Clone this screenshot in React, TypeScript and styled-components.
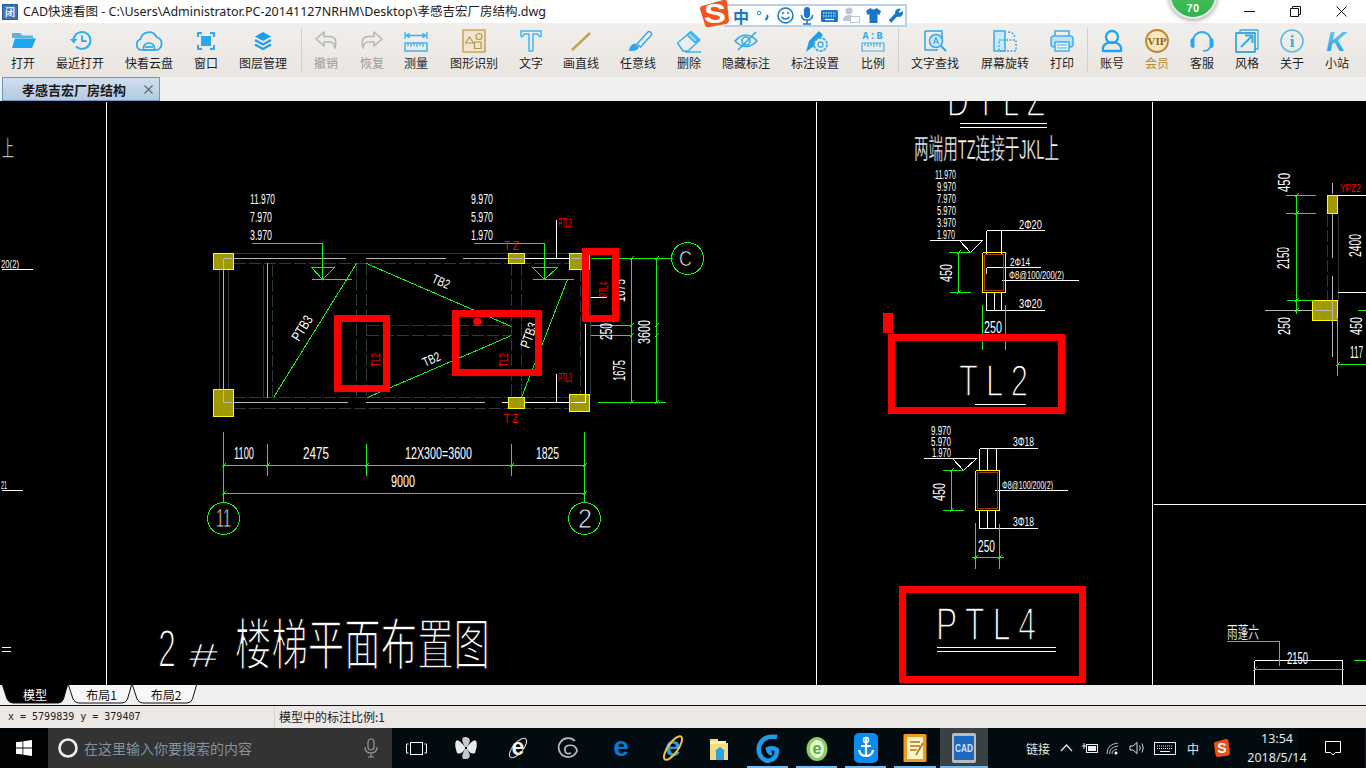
import React from "react";
import styled, { createGlobalStyle } from "styled-components";

const Global = createGlobalStyle`
  html, body { margin: 0; padding: 0; background: #000; overflow: hidden; }
  * { box-sizing: border-box; }
`;

const UI_FONT = `"Noto Sans CJK SC", "Noto Sans", sans-serif`;
const CAD_FONT = `"Liberation Sans", "Noto Sans CJK SC", sans-serif`;

const Page = styled.div`
  width: 1366px;
  height: 768px;
  display: flex;
  flex-direction: column;
  position: relative;
  overflow: hidden;
  font-family: ${UI_FONT};
  color: #222;
`;

/* ---------- title bar ---------- */
const TitleBar = styled.header`
  height: 23px;
  flex: none;
  background: #fff;
  display: flex;
  align-items: center;
  padding-left: 2px;
`;
const TitleText = styled.span`
  margin-left: 5px;
  font-family: "Noto Sans", "Noto Sans CJK SC", sans-serif;
  font-size: 12.5px;
  line-height: 23px;
  color: #1a1a1a;
  white-space: nowrap;
`;
const WindowButtons = styled.div`
  margin-left: auto;
  margin-right: 2px;
  display: flex;
`;
const WindowButton = styled.div`
  width: 46px;
  height: 23px;
  display: flex;
  align-items: center;
  justify-content: center;
  svg { display: block; }
`;

/* ---------- overlays ---------- */
const LevelBadge = styled.div`
  position: absolute;
  left: 1169px;
  top: -29px;
  width: 48px;
  height: 48px;
  border-radius: 50%;
  background: linear-gradient(#57c765, #2fb44c);
  border: 2px solid #e4e8e4;
  box-shadow: 0 1px 5px rgba(0, 0, 0, 0.45);
  color: #fff;
  font: bold 11px/1 "Liberation Sans", sans-serif;
  letter-spacing: 0.5px;
  text-align: center;
  padding-top: 30px;
  z-index: 3;
`;
const ImeBar = styled.div`
  position: absolute;
  left: 724px;
  top: 4px;
  width: 183px;
  height: 23px;
  background: #fbfdff;
  border: 2px solid #bcd0e6;
  border-left: none;
  z-index: 3;
  display: flex;
  align-items: center;
  padding-left: 6px;
`;
const ImeSlot = styled.div`
  width: 22px;
  height: 19px;
  display: flex;
  align-items: center;
  justify-content: center;
  flex: none;
  color: #1976c8;
  font-size: 16px;
  font-weight: 700;
  line-height: 1;
`;
const ImeLogo = styled.div`
  position: absolute;
  left: 700px;
  top: 0;
  width: 30px;
  height: 28px;
  z-index: 4;
  svg { display: block; }
`;

/* ---------- toolbar ---------- */
const Toolbar = styled.nav`
  height: 54px;
  flex: none;
  display: flex;
  background: linear-gradient(#f1efec, #e9e5e1);
`;
const ToolItem = styled.div<{ $w: number }>`
  width: ${(p) => p.$w}px;
  flex: none;
  padding-top: 4px;
  display: flex;
  flex-direction: column;
  align-items: center;
  svg { display: block; flex: none; }
`;
const ToolLabel = styled.span<{ $tone?: string }>`
  font-size: 12px;
  line-height: 16px;
  white-space: nowrap;
  color: ${(p) => (p.$tone === "off" ? "#9a9a9a" : p.$tone === "vip" ? "#bd8a2e" : "#1f1f1f")};
`;
const ToolSep = styled.div<{ $ml: number; $mr: number }>`
  width: 1px;
  height: 44px;
  margin: 5px ${(p) => p.$mr}px 0 ${(p) => p.$ml}px;
  background: #d3d0cc;
  flex: none;
`;

/* ---------- document tabs ---------- */
const DocTabs = styled.div`
  height: 24px;
  flex: none;
  background: #f0f0f0;
  padding-left: 2px;
  display: flex;
`;
const DocTab = styled.div`
  width: 158px;
  height: 24px;
  background: linear-gradient(#d0dfee, #b3cbe3);
  border: 1px solid #7196c4;
  display: flex;
  align-items: center;
  padding-left: 19px;
  font-size: 13px;
  font-weight: 700;
  color: #1a1a1a;
`;
const DocClose = styled.span`
  margin-left: auto;
  margin-right: 6px;
  display: flex;
  svg { display: block; }
`;

/* ---------- drawing ---------- */
const Canvas = styled.main`
  height: 584px;
  flex: none;
  background: #000;
  svg { display: block; }
`;
const CadStroke = styled.path<{ $c: string; $dash?: boolean }>`
  fill: none;
  stroke: ${(p) => p.$c};
  stroke-width: 1;
  stroke-dasharray: ${(p) => (p.$dash ? "12 3" : "none")};
`;
const CadLabel = styled.text<{ $c: string; $thin: number }>`
  font-family: ${CAD_FONT};
  fill: ${(p) => p.$c};
  stroke: ${(p) => (p.$thin ? "#000" : "none")};
  stroke-width: ${(p) => p.$thin}px;
`;
const Column = styled.rect`
  fill: #a09a00;
  stroke: #ffff00;
  stroke-width: 1;
`;
const Marker = styled.rect`
  fill: none;
  stroke: #ff0000;
  stroke-width: 7;
`;
const Axis = styled.circle`
  fill: none;
  stroke: #1cf01c;
  stroke-width: 1;
  shape-rendering: crispEdges;
`;

/* ---------- sheet tabs ---------- */
const SheetBar = styled.div`
  height: 21px;
  flex: none;
  background: #f0f0f0;
  border-bottom: 1px solid #111;
  padding-left: 2px;
  display: flex;
`;
const SheetTab = styled.div<{ $w: number; $on?: boolean }>`
  position: relative;
  width: ${(p) => p.$w}px;
  height: 19px;
  padding-left: ${(p) => (p.$on ? 0 : 3)}px;
  display: flex;
  align-items: center;
  justify-content: center;
  font-size: 12px;
  line-height: 1;
  color: ${(p) => (p.$on ? "#fff" : "#111")};
  svg { position: absolute; inset: 0; }
  span { position: relative; }
`;

/* ---------- status bar ---------- */
const StatusBar = styled.div`
  height: 22px;
  flex: none;
  background: #ebe8e5;
  display: flex;
  align-items: center;
`;
const Coords = styled.div`
  width: 275px;
  height: 22px;
  padding-left: 8px;
  border-right: 1px solid #d6d3d0;
  font: 10px/22px "DejaVu Sans Mono", monospace;
  color: #222;
`;
const ScaleNote = styled.div`
  padding-left: 4px;
  font-size: 12px;
  line-height: 22px;
  color: #222;
`;

/* ---------- taskbar ---------- */
const Taskbar = styled.footer`
  height: 40px;
  flex: none;
  background: #020c10;
  display: flex;
  align-items: stretch;
`;
const StartButton = styled.div`
  width: 48px;
  flex: none;
  background: #010305;
  display: flex;
  align-items: center;
  justify-content: center;
`;
const SearchBox = styled.div`
  width: 344px;
  flex: none;
  background: #333;
  display: flex;
  align-items: center;
  padding-left: 9px;
  font-size: 14px;
  color: #84929e;
  svg { display: block; flex: none; }
`;
const SearchText = styled.span`
  margin-left: 5px;
  margin-right: 10px;
  width: 270px;
  white-space: nowrap;
`;
const TaskSlot = styled.div<{ $w: number; $open?: boolean; $active?: boolean }>`
  width: ${(p) => p.$w}px;
  flex: none;
  display: flex;
  align-items: center;
  justify-content: center;
  background: ${(p) => (p.$active ? "#3a4144" : "transparent")};
  position: relative;
  svg { display: block; }
  &::after {
    content: "";
    display: ${(p) => (p.$open ? "block" : "none")};
    position: absolute;
    left: ${(p) => (p.$active ? 0 : 4)}px;
    right: ${(p) => (p.$active ? 0 : 4)}px;
    bottom: 0;
    height: 2px;
    background: #76b9ed;
  }
`;
const Tray = styled.div`
  flex: none;
  margin-left: 38px;
  display: flex;
  align-items: center;
  color: #e8e8e8;
  svg { display: block; flex: none; }
`;
const TrayText = styled.span<{ $w: number }>`
  width: ${(p) => p.$w}px;
  flex: none;
  text-align: center;
  font-size: 12px;
  white-space: nowrap;
`;
const TrayIcon = styled.div<{ $w: number }>`
  width: ${(p) => p.$w}px;
  flex: none;
  display: flex;
  justify-content: center;
`;
const Clock = styled.div`
  width: 70px;
  flex: none;
  font-family: "Noto Sans", sans-serif;
  font-size: 12.5px;
  line-height: 19px;
  padding-top: 1px;
  color: #e8e8e8;
  text-align: center;
  white-space: nowrap;
  background: linear-gradient(90deg, transparent 55px, #010305 55px);
`;
const Notify = styled.div`
  flex: none;
  width: 54px;
  padding-right: 12px;
  background: #010305;
  border-right: 1px solid #1c2226;
  display: flex;
  align-items: center;
  justify-content: center;
`;

/* ---------- toolbar icons ---------- */
const B = "#2aa9ee";
const IconBox: React.FC<{ children: React.ReactNode }> = ({ children }) => (
  <svg width="34" height="28" viewBox="0 0 34 28" fill="none" strokeLinejoin="round">
    {children}
  </svg>
);

const ICONS: Record<string, React.ReactNode> = {
  open: (
    <>
      <path d="M6 6h8l2.500 2.500H27V11H6z" fill="#55b3ee" />
      <path d="M6 21l3-9.500h21L26 21z" fill="#1ea5f0" />
    </>
  ),
  recent: (
    <g stroke="#33aef0" strokeWidth="2">
      <path d="M10.500 12.500a8.500 8.500 0 1 1 2.500 7" />
      <path d="M7 12h7.500l-3.800 4.500z" fill="#33aef0" stroke="none" />
      <path d="M19 8.500V14h4.500" />
    </g>
  ),
  cloud: (
    <g stroke={B} strokeWidth="1.700">
      <path d="M10 23a5.500 5.500 0 0 1-1.500-10.700A8.500 8.500 0 0 1 24.500 10a6.800 6.800 0 0 1 .5 13z" />
      <path d="M11.500 23v-2.500a5.500 4.500 0 0 1 11 0V23z" />
      <path d="M13 20h8" />
    </g>
  ),
  window: (
    <>
      <g stroke={B} strokeWidth="2">
        <path d="M9 10V6h4M21 6h4v4M25 18v4h-4M13 22H9v-4" />
      </g>
      <rect x="12" y="9" width="10" height="10" fill="#2aa7ee" />
    </>
  ),
  layers: (
    <>
      <path d="M17 5l8 4.500-8 4.500-8-4.500z" fill="#1e9fe8" />
      <path d="M9 13l8 4.500 8-4.500" stroke="#1e9fe8" strokeWidth="2.200" />
      <path d="M9 17.500l8 4.500 8-4.500" stroke="#1e9fe8" strokeWidth="2.200" />
    </>
  ),
  undo: (
    <path d="M15 5L7 12l8 7v-4h6q4 0 5 6q3-11-5-11.500h-6z" stroke="#b8b8b8" strokeWidth="1.600" />
  ),
  redo: (
    <path d="M19 5l8 7-8 7v-4h-6q-4 0-5 6q-3-11 5-11.500h6z" stroke="#b8b8b8" strokeWidth="1.600" />
  ),
  measure: (
    <g stroke="#3fb2ef" strokeWidth="1.300">
      <path d="M6 5v7M28 5v7M7 8.500h20" />
      <path d="M7 8.500l3-2v4zM27 8.500l-3-2v4z" fill="#3fb2ef" />
      <rect x="6" y="16" width="22" height="8" strokeWidth="1.500" />
      <path d="M9 16v3M12 16v4M15 16v3M18 16v4M21 16v3M24 16v4" />
    </g>
  ),
  shape: (
    <>
      <rect x="6" y="3" width="22" height="22" fill="#efe4cd" stroke="#c7a762" strokeWidth="1.600" />
      <g stroke="#b5964f" strokeWidth="1.200">
        <circle cx="22" cy="9.500" r="3" />
        <path d="M8.500 16l4-6 4 6z" />
        <rect x="17.500" y="15" width="6.500" height="6.500" />
      </g>
    </>
  ),
  text: (
    <path d="M7 4h20v5.500h-1.800L24 7h-5v17h-4V7h-5L8.800 9.500H7z" stroke="#3fb8f0" strokeWidth="1.500" />
  ),
  line: <path d="M8 23L26 6" stroke="#c6a254" strokeWidth="2.500" />,
  brush: (
    <>
      <path d="M16 17L26.500 5.500a2 2 0 0 1 3.500 3L19.500 20z" stroke="#2da8ea" strokeWidth="1.400" />
      <path d="M8 24q.5-6.500 6-7.500l4 3.500q-1 4.500-10 4z" fill="#2aa6ea" />
    </>
  ),
  eraser: (
    <g stroke="#35aeea" strokeWidth="1.400">
      <path d="M5.500 16L19 4.500l9 8.500-12 11h-5z" />
      <path d="M15 8l3-2.500 8 7.500-3 2.500z" fill="#9ad6f2" />
      <path d="M13 25h16" />
    </g>
  ),
  eye: (
    <g stroke="#2aa9ee" strokeWidth="1.600">
      <path d="M6 14q11-12 22 0q-11 11-22 0z" />
      <circle cx="17" cy="14" r="4" />
      <path d="M9 23L27 5" />
    </g>
  ),
  setting: (
    <>
      <path d="M8 25l3-11L21 4l4 4-9 11z" fill="#1e9fe8" />
      <circle cx="22.500" cy="17.500" r="6.500" fill="#f0eeeb" stroke="#38ace8" strokeWidth="1.800" strokeDasharray="3 1" />
      <circle cx="22.500" cy="17.500" r="2.500" stroke="#38ace8" strokeWidth="1.300" />
    </>
  ),
  ratio: (
    <>
      <text x="17" y="12" textAnchor="middle" fontFamily="Liberation Mono, monospace" fontWeight="700" fontSize="10" letterSpacing="1" fill="#2aa6ea">
        A:B
      </text>
      <g stroke="#42b2ea" strokeWidth="1.200">
        <rect x="6" y="16" width="22" height="8" />
        <path d="M9 16v3M12 16v4M15 16v3M18 16v4M21 16v3M24 16v4" />
      </g>
    </>
  ),
  find: (
    <g stroke="#2fa9ea" strokeWidth="1.500">
      <path d="M7 4h17v10M7 4v19h13" />
      <circle cx="18" cy="14" r="6.500" fill="#cfe8f7" />
      <path d="M23 19l5 5" strokeWidth="2" />
      <path d="M15.500 17l2.500-6.500L20.500 17M16.500 15h3" strokeWidth="1.100" />
    </g>
  ),
  rotate: (
    <>
      <rect x="6" y="4" width="11" height="20" fill="#cde9f8" stroke="#38ace8" strokeWidth="1.500" />
      <rect x="11" y="13" width="17" height="11" stroke="#38ace8" strokeWidth="1.400" strokeDasharray="2 1.500" />
      <path d="M20 5q6 0 7 6" stroke="#38ace8" strokeWidth="1.400" strokeDasharray="2 1.500" />
    </>
  ),
  print: (
    <g stroke="#3fb2ef" strokeWidth="1.600">
      <path d="M10 9V4h14v5" />
      <rect x="6" y="9" width="22" height="11" rx="3" fill="#bfe2f6" />
      <rect x="10" y="15" width="14" height="9" fill="#eef6fb" />
      <path d="M12 18h10M12 21h10" strokeWidth="1" />
    </g>
  ),
  user: (
    <g stroke="#1aa6f5" strokeWidth="2.300">
      <circle cx="17" cy="10" r="6" />
      <path d="M8 24q-1-7 6-8.500h6q7 1.500 6 8.500z" />
    </g>
  ),
  vip: (
    <>
      <circle cx="17" cy="14" r="11" fill="#f8e8c0" stroke="#b9862f" strokeWidth="1.800" />
      <text x="17" y="18" textAnchor="middle" fontFamily="Liberation Serif, serif" fontWeight="700" fontSize="11" fill="#8f5f16">
        VIP
      </text>
    </>
  ),
  service: (
    <>
      <path d="M8 14a9 9 0 0 1 18 0" stroke="#27a7ee" strokeWidth="2" />
      <path d="M5.500 13a3 4.500 0 0 1 4-1v8a3 4.500 0 0 1-4-1z" fill="#27a7ee" />
      <path d="M28.500 13a3 4.500 0 0 0-4-1v8a3 4.500 0 0 0 4-1z" fill="#27a7ee" />
      <path d="M25 20q-1 4-7 4" stroke="#27a7ee" strokeWidth="1.500" />
    </>
  ),
  style: (
    <g stroke="#3aaae5" strokeWidth="1.800">
      <path d="M10 6V3h18v19h-3" strokeWidth="1.300" />
      <rect x="6" y="6" width="19" height="19" />
      <path d="M11 20L22 9M15 8.500h7.500V16" strokeWidth="2" />
    </g>
  ),
  about: (
    <>
      <circle cx="17" cy="14" r="11" stroke="#5abbe8" strokeWidth="1.600" />
      <text x="17" y="20" textAnchor="middle" fontFamily="Liberation Serif, serif" fontWeight="700" fontSize="17" fill="#3fa9de">
        i
      </text>
    </>
  ),
  site: (
    <>
      <defs>
        <linearGradient id="siteK" x1="0" y1="0" x2="0" y2="1">
          <stop offset="0" stopColor="#6fcaf2" />
          <stop offset="1" stopColor="#159ee0" />
        </linearGradient>
      </defs>
      <text x="16" y="24" textAnchor="middle" fontFamily="Liberation Sans, sans-serif" fontStyle="italic" fontWeight="700" fontSize="27" fill="url(#siteK)">
        K
      </text>
    </>
  ),
};

type Tool = { k: string; label: string; w: number; tone?: string };
const GROUP_A: Tool[] = [
  { k: "open", label: "打开", w: 46 },
  { k: "recent", label: "最近打开", w: 68 },
  { k: "cloud", label: "快看云盘", w: 70 },
  { k: "window", label: "窗口", w: 44 },
  { k: "layers", label: "图层管理", w: 70 },
];
const GROUP_B: Tool[] = [
  { k: "undo", label: "撤销", w: 44, tone: "off" },
  { k: "redo", label: "恢复", w: 48, tone: "off" },
  { k: "measure", label: "测量", w: 40 },
  { k: "shape", label: "图形识别", w: 76 },
  { k: "text", label: "文字", w: 38 },
  { k: "line", label: "画直线", w: 62 },
  { k: "brush", label: "任意线", w: 52 },
  { k: "eraser", label: "删除", w: 50 },
  { k: "eye", label: "隐藏标注", w: 64 },
  { k: "setting", label: "标注设置", w: 74 },
  { k: "ratio", label: "比例", w: 42 },
];
const GROUP_C: Tool[] = [
  { k: "find", label: "文字查找", w: 70 },
  { k: "rotate", label: "屏幕旋转", w: 70 },
  { k: "print", label: "打印", w: 44 },
];
const GROUP_D: Tool[] = [
  { k: "user", label: "账号", w: 44 },
  { k: "vip", label: "会员", w: 46, tone: "vip" },
  { k: "service", label: "客服", w: 44 },
  { k: "style", label: "风格", w: 46 },
  { k: "about", label: "关于", w: 44 },
  { k: "site", label: "小站", w: 46 },
];

const ToolGroup: React.FC<{ tools: Tool[] }> = ({ tools }) => (
  <>
    {tools.map((t) => (
      <ToolItem key={t.k} $w={t.w}>
        <IconBox>{ICONS[t.k]}</IconBox>
        <ToolLabel $tone={t.tone}>{t.label}</ToolLabel>
      </ToolItem>
    ))}
  </>
);

/* ---------- CAD data (sheet coordinates) ---------- */
const seg = (list: number[][]) =>
  list.map(([a, b, c, d]) => `M${Math.round(a) + 0.5} ${Math.round(b) + 0.5}L${Math.round(c) + 0.5} ${Math.round(d) + 0.5}`).join("");

const WHITE_LINES = [
  [106, 101, 106, 685], [816, 101, 816, 685], [1152, 101, 1152, 685], [1153, 504, 1366, 504],
  [1, 269, 32, 269], [1, 490, 22, 490], [1, 647, 10, 647], [1, 651, 10, 651],
  [959, 123, 1046, 123], [959, 127, 1046, 127],
  [929, 240, 982, 240], [959, 240, 970, 252], [982, 240, 970, 252],
  [986, 230, 1044, 230], [986, 230, 986, 253], [1001, 230, 1001, 253],
  [986, 310, 1044, 310], [986, 292, 986, 310], [994, 292, 994, 310], [1001, 292, 1001, 310],
  [986, 267, 1040, 267], [986, 267, 986, 273], [1001, 280, 1078, 280],
  [974, 404, 1025, 404],
  [923, 458, 976, 458], [952, 458, 963, 470], [976, 458, 963, 470],
  [979, 448, 1037, 448], [979, 448, 979, 470], [987, 448, 987, 470], [996, 448, 996, 470],
  [979, 528, 1037, 528], [979, 510, 979, 528], [987, 510, 987, 528], [995, 510, 995, 528],
  [994, 490, 1067, 490],
  [936, 647, 1055, 647], [936, 651, 1055, 651],
  [1254, 660, 1342, 660], [1254, 660, 1254, 685], [1342, 660, 1342, 685],
  [1337, 195, 1365, 195], [1337, 292, 1365, 292],
  [524, 258, 570, 258], [501, 402, 585, 402], [585, 323, 585, 402],
  [556, 219, 556, 258], [556, 373, 556, 402], [590, 297, 606, 297],
];
const GREY_LINES = [
  [223, 258, 345, 258], [365, 258, 445, 258], [462, 258, 508, 258],
  [223, 262, 223, 392], [267, 262, 267, 397], [223, 402, 347, 402], [365, 402, 484, 402],
  [1264, 310, 1332, 310], [1332, 182, 1332, 193], [1332, 195, 1332, 257], [1332, 275, 1332, 356],
];
const OVER_COLUMN_LINES = [
  [223, 258, 233, 258], [223, 258, 223, 269], [223, 389, 223, 402], [223, 402, 233, 402],
  [570, 258, 580, 258], [508, 258, 524, 258], [1313, 310, 1332, 310], [1332, 300, 1332, 320],
];
const DARK_LINES = [
  [233, 253, 569, 253], [219, 269, 219, 389], [228, 269, 228, 389], [263, 264, 263, 397],
  [590, 269, 590, 394], [1338, 214, 1338, 300],
];
const DASH_LINES = [
  [233, 263, 569, 263], [233, 397, 569, 397], [233, 408, 569, 408], [272, 264, 272, 397],
  [356, 263, 356, 397], [366, 263, 366, 397], [511, 263, 511, 397], [521, 263, 521, 397],
  [366, 325, 511, 325], [366, 335, 511, 335], [580, 269, 580, 394], [1327, 214, 1327, 300],
];
const GREEN_LINES = [
  [251, 243, 322, 243], [322, 243, 322, 279], [311, 279, 351, 279], [311, 267, 334, 267], [311, 267, 322, 279], [334, 267, 322, 279],
  [473, 243, 544, 243], [544, 243, 544, 279], [532, 267, 557, 267], [532, 267, 544, 279], [557, 267, 544, 279], [532, 279, 573, 279],
  [273, 397, 356, 263], [366, 263, 511, 326], [367, 397, 511, 335], [521, 397, 567, 279],
  [590, 258, 672, 258], [590, 325, 631, 325], [590, 335, 631, 335], [597, 402, 665, 402], [631, 258, 631, 402], [656, 258, 656, 402],
  [223, 431, 223, 502], [267, 443, 267, 475], [366, 443, 366, 475], [511, 443, 511, 475], [584, 431, 584, 502],
  [223, 465, 585, 465], [223, 493, 585, 493],
  [948, 252, 970, 252], [949, 292, 970, 292], [958, 252, 958, 292], [982, 304, 982, 349], [1005, 304, 1005, 349],
  [942, 470, 963, 470], [942, 510, 963, 510], [951, 470, 951, 510], [975, 522, 975, 568], [999, 523, 999, 568], [971, 557, 1003, 557],
  [1285, 195, 1315, 195], [1285, 213, 1315, 213], [1296, 194, 1296, 313], [1286, 300, 1313, 300],
  [1337, 317, 1337, 375], [1337, 364, 1365, 364], [1357, 310, 1365, 310],
  [1226, 641, 1279, 641], [1279, 641, 1279, 665], [1254, 669, 1343, 669], [1353, 660, 1365, 660],
];
const tick = (x: number, y: number) => [x - 2, y + 2, x + 2, y - 2];
const GREEN_TICKS = [
  ...[223, 267, 366, 511, 584].map((x) => tick(x, 465)),
  tick(223, 493), tick(584, 493),
  ...[258, 325, 335, 402].flatMap((y) => [tick(631, y), tick(656, y)]),
  tick(958, 252), tick(958, 292), tick(951, 470), tick(951, 510), tick(975, 557), tick(999, 557),
  tick(1296, 195), tick(1296, 213), tick(1296, 300), tick(1296, 310), tick(1337, 364), tick(1254, 669),
];

type Lbl = { t: string; x: number; y: number; w: number; s: number; r?: number; c?: string; thin?: number };
const RED = "#ff0000";
const LABELS: Lbl[] = [
  { t: "上", x: 2, y: 156, w: 12, s: 22, thin: 0.7 },
  { t: "20(2)", x: 1, y: 268, w: 18, s: 11 },
  { t: "21", x: 1, y: 489, w: 6, s: 11 },
  { t: "11.970", x: 250, y: 204, w: 25, s: 14 },
  { t: "7.970", x: 250, y: 222, w: 22, s: 14 },
  { t: "3.970", x: 250, y: 240, w: 22, s: 14 },
  { t: "9.970", x: 471, y: 204, w: 22, s: 14 },
  { t: "5.970", x: 471, y: 222, w: 22, s: 14 },
  { t: "1.970", x: 471, y: 240, w: 22, s: 14 },
  { t: "PTL3", x: 558, y: 227, w: 14, s: 12, c: RED },
  { t: "PTL3", x: 558, y: 382, w: 14, s: 12, c: RED },
  { t: "T Z", x: 504, y: 250, w: 15, s: 12, c: RED },
  { t: "T Z", x: 504, y: 423, w: 14, s: 12, c: RED },
  { t: "PTL4", x: 608, y: 297, w: 15, s: 12, r: -90, c: RED },
  { t: "TL2", x: 380, y: 367, w: 14, s: 13, r: -90, c: RED },
  { t: "TL2", x: 508, y: 367, w: 14, s: 13, r: -90, c: RED },
  { t: "TB2", x: 431, y: 282, w: 18, s: 13, r: 24 },
  { t: "TB2", x: 425, y: 367, w: 18, s: 13, r: -24 },
  { t: "PTB3", x: 299, y: 342, w: 27, s: 14, r: -58 },
  { t: "PTB3", x: 529, y: 349, w: 26, s: 14, r: -70 },
  { t: "1675", x: 625, y: 302, w: 23, s: 16, r: -90 },
  { t: "250", x: 612, y: 340, w: 17, s: 16, r: -90 },
  { t: "3600", x: 650, y: 344, w: 24, s: 17, r: -90 },
  { t: "1675", x: 625, y: 381, w: 21, s: 16, r: -90 },
  { t: "1100", x: 234, y: 459, w: 20, s: 16 },
  { t: "2475", x: 303, y: 459, w: 26, s: 16 },
  { t: "12X300=3600", x: 405, y: 459, w: 67, s: 16 },
  { t: "1825", x: 536, y: 459, w: 23, s: 16 },
  { t: "9000", x: 391, y: 487, w: 24, s: 16 },
  { t: "C", x: 679, y: 266, w: 13, s: 22, thin: 0.7 },
  { t: "11", x: 216, y: 527, w: 15, s: 25, thin: 0.8 },
  { t: "2", x: 578, y: 528, w: 14, s: 27, thin: 0.8 },
  { t: "D T L Z", x: 947, y: 116, w: 98, s: 44, thin: 1.6 },
  { t: "两端用TZ连接于JKL上", x: 914, y: 159, w: 145, s: 28, thin: 0.45 },
  { t: "11.970", x: 935, y: 179, w: 21, s: 12 },
  { t: "9.970", x: 937, y: 191, w: 19, s: 12 },
  { t: "7.970", x: 937, y: 203, w: 19, s: 12 },
  { t: "5.970", x: 937, y: 215, w: 19, s: 12 },
  { t: "3.970", x: 937, y: 227, w: 19, s: 12 },
  { t: "1.970", x: 937, y: 239, w: 18, s: 12 },
  { t: "450", x: 952, y: 282, w: 18, s: 16, r: -90 },
  { t: "2Φ20", x: 1019, y: 229, w: 23, s: 12 },
  { t: "2Φ14", x: 1010, y: 266, w: 20, s: 10 },
  { t: "Φ8@100/200(2)", x: 1009, y: 279, w: 55, s: 10 },
  { t: "3Φ20", x: 1019, y: 308, w: 23, s: 12 },
  { t: "250", x: 984, y: 333, w: 18, s: 16 },
  { t: "T L  2", x: 959, y: 396, w: 69, s: 45, thin: 1.6 },
  { t: "YPZ2", x: 1340, y: 192, w: 21, s: 11, c: RED },
  { t: "450", x: 1290, y: 192, w: 19, s: 16, r: -90 },
  { t: "2150", x: 1289, y: 269, w: 22, s: 16, r: -90 },
  { t: "250", x: 1290, y: 335, w: 18, s: 16, r: -90 },
  { t: "2400", x: 1361, y: 257, w: 23, s: 16, r: -90 },
  { t: "450", x: 1362, y: 335, w: 18, s: 16, r: -90 },
  { t: "117", x: 1350, y: 358, w: 13, s: 16 },
  { t: "9.970", x: 931, y: 435, w: 20, s: 12 },
  { t: "5.970", x: 931, y: 446, w: 20, s: 12 },
  { t: "1.970", x: 932, y: 457, w: 19, s: 12 },
  { t: "450", x: 945, y: 501, w: 18, s: 16, r: -90 },
  { t: "3Φ18", x: 1013, y: 446, w: 21, s: 12 },
  { t: "3Φ18", x: 1013, y: 526, w: 21, s: 12 },
  { t: "Φ8@100/200(2)", x: 1002, y: 489, w: 51, s: 10 },
  { t: "250", x: 978, y: 552, w: 17, s: 16 },
  { t: "P T L 4", x: 936, y: 640, w: 100, s: 46, thin: 1.6 },
  { t: "雨蓬六", x: 1227, y: 638, w: 32, s: 16, thin: 0.2 },
  { t: "2150", x: 1287, y: 664, w: 21, s: 16 },
  { t: "2", x: 158, y: 667, w: 18, s: 54, thin: 1.8 },
  { t: "#", x: 189, y: 667, w: 29, s: 34, thin: 0.7 },
  { t: "楼梯平面布置图", x: 235, y: 664, w: 255, s: 55, thin: 1.5 },
];

const Drawing: React.FC = () => (
  <svg width="1366" height="584" viewBox="0 101 1366 584">
    <g shapeRendering="crispEdges">
      <CadStroke $c="#2c3c3c" d={seg(DARK_LINES)} />
      <CadStroke $c="#2c3c3c" $dash d={seg(DASH_LINES)} />
      <CadStroke $c="#b8b8b8" d={seg(GREY_LINES)} />
      <CadStroke $c="#ffffff" d={seg(WHITE_LINES)} />
      <Column x="213.500" y="253.500" width="20" height="16" />
      <Column x="213.500" y="389.500" width="20" height="27" />
      <Column x="569.500" y="253.500" width="20" height="16" />
      <Column x="569.500" y="394.500" width="20" height="17" />
      <Column x="508.500" y="253.500" width="16" height="10" />
      <Column x="508.500" y="397.500" width="16" height="11" />
      <Column x="1327.500" y="195.500" width="10" height="18" />
      <Column x="1312.500" y="300.500" width="25" height="20" />
      <CadStroke $c="#ffff00" d={seg([[982, 252, 1005, 252], [982, 292, 1005, 292], [982, 252, 982, 292], [1005, 252, 1005, 292], [975, 470, 999, 470], [975, 510, 999, 510], [975, 470, 975, 510], [999, 470, 999, 510]])} />
      <CadStroke $c="#a8350f" d={seg([[984, 254, 1003, 254], [984, 290, 1003, 290], [984, 254, 984, 290], [1003, 254, 1003, 290], [977, 472, 997, 472], [977, 508, 997, 508], [977, 472, 977, 508], [997, 472, 997, 508]])} />
      <CadStroke $c="#b8b8b8" d={seg(OVER_COLUMN_LINES)} />
      <CadStroke $c="#ffffff" d={seg([[570, 402, 585, 402], [585, 394, 585, 402]])} />
      <CadStroke $c="#1cf01c" d={seg(GREEN_LINES)} />
      <CadStroke $c="#1cf01c" d={seg(GREEN_TICKS)} />
    </g>
    <Axis cx="687.500" cy="258.500" r="16" />
    <Axis cx="223.500" cy="518.500" r="16" />
    <Axis cx="584.500" cy="518.500" r="16" />
    {LABELS.map((l, i) => (
      <CadLabel
        key={i}
        $c={l.c ?? "#ffffff"}
        $thin={l.thin ?? 0}
        x={l.x}
        y={l.y}
        fontSize={l.s}
        textLength={l.w}
        lengthAdjust="spacingAndGlyphs"
        transform={l.r ? `rotate(${l.r} ${l.x} ${l.y})` : undefined}
      >
        {l.t}
      </CadLabel>
    ))}
    <g shapeRendering="crispEdges">
      <Marker x="337.500" y="318.500" width="49" height="70" />
      <Marker x="455.500" y="313.500" width="83" height="59" />
      <Marker x="585.500" y="251.500" width="30" height="67" />
      <Marker x="891.500" y="337.500" width="170" height="73" />
      <Marker x="902.500" y="589.500" width="180" height="90" />
      <rect x="883" y="313" width="10" height="20" fill="#ff0000" />
    </g>
    <ellipse cx="477.500" cy="321.700" rx="4.500" ry="4" fill="#ff0000" />
  </svg>
);

const TabShape: React.FC<{ w: number; on?: boolean }> = ({ w, on }) => (
  <svg width={w} height="19" viewBox={`0 0 ${w} 19`} fill="none">
    <path
      d={`M0.500 0L5 14Q7 18 11 18H${w - 10}Q${w - 6} 18 ${w - 4.5} 14L${w - 0.5} 0`}
      fill={on ? "#000" : "#f8f8f8"}
      stroke="#111"
    />
  </svg>
);

const Glyph = styled.text`
  font-family: "Liberation Sans", sans-serif;
`;

const TASK_ICONS: { w: number; open?: boolean; active?: boolean; icon: React.ReactNode }[] = [
  {
    w: 52,
    icon: (
      <svg width="24" height="24" viewBox="0 0 24 24" fill="#eaeaea">
        <path d="M11 11Q4 2 2 5T3 17Q7 19 11 13zM13 11Q20 2 22 5T21 17Q17 19 13 13z" />
        <path d="M11 11Q5 0 12 1T13 11zM11 13Q5 24 12 23T13 13z" opacity=".85" />
      </svg>
    ),
  },
  {
    w: 52,
    icon: (
      <svg width="26" height="28" viewBox="0 0 26 28">
        <ellipse cx="13" cy="14" rx="12" ry="5" transform="rotate(-50 13 14)" fill="none" stroke="#d8d8d8" strokeWidth="1" />
        <Glyph x="13" y="21" textAnchor="middle" fontSize="23" fontWeight="700" fill="#f2f2f2">e</Glyph>
      </svg>
    ),
  },
  {
    w: 48,
    icon: (
      <svg width="24" height="24" viewBox="0 0 24 24" fill="none" stroke="#b9bdbd" strokeWidth="1.700">
        <path d="M19 5A9.500 9.500 0 1 0 21 15Q20 8 12 9.500Q8 11 9 15T15 17" />
      </svg>
    ),
  },
  {
    w: 58,
    icon: (
      <svg width="26" height="28" viewBox="0 0 26 28">
        <Glyph x="13" y="22" textAnchor="middle" fontSize="28" fontWeight="700" fill="#0b78d0">e</Glyph>
      </svg>
    ),
  },
  {
    w: 45,
    icon: (
      <svg width="28" height="30" viewBox="0 0 28 30">
        <Glyph x="14" y="23" textAnchor="middle" fontSize="28" fontWeight="700" fill="#2d9be6">e</Glyph>
        <ellipse cx="14" cy="15" rx="14" ry="5" transform="rotate(-55 14 15)" fill="none" stroke="#f2c230" strokeWidth="2" />
      </svg>
    ),
  },
  {
    w: 48,
    icon: (
      <svg width="24" height="24" viewBox="0 0 24 24">
        <path d="M3 3h8v4h10v17H3z" fill="#f4da7e" />
        <rect x="3" y="5" width="16" height="3" fill="#fdf2c0" />
        <rect x="9" y="15" width="8" height="9" fill="#2f9fe4" />
        <path d="M8 15l5-4 5 4z" fill="#2f9fe4" />
      </svg>
    ),
  },
  {
    w: 49,
    open: true,
    icon: (
      <svg width="26" height="30" viewBox="0 0 26 30" fill="none">
        <path d="M22 4Q8 2 4 13Q2 24 12 28Q22 27 22 17Q18 14 13 16Q14 21 17 20" stroke="#1d9ce8" strokeWidth="4.500" />
      </svg>
    ),
  },
  {
    w: 49,
    open: true,
    icon: (
      <svg width="24" height="28" viewBox="0 0 24 28">
        <ellipse cx="12" cy="15" rx="10.500" ry="12" fill="#8ccf5a" />
        <ellipse cx="12" cy="15" rx="7" ry="9" fill="#eaf7da" />
        <Glyph x="12" y="20" textAnchor="middle" fontSize="16" fontWeight="700" fill="#4db034">e</Glyph>
      </svg>
    ),
  },
  {
    w: 49,
    open: true,
    icon: (
      <svg width="24" height="30" viewBox="0 0 24 30" fill="none">
        <rect x="0" y="0" width="24" height="30" rx="5" fill="#0a8bee" />
        <path d="M12 6v17M7 13h10M5 17q1 6 7 6q6 0 7-6" stroke="#fff" strokeWidth="2.200" />
        <circle cx="12" cy="7" r="2.500" stroke="#fff" strokeWidth="1.500" />
      </svg>
    ),
  },
  {
    w: 50,
    open: true,
    icon: (
      <svg width="24" height="30" viewBox="0 0 24 30" fill="none">
        <rect x="0.500" y="1" width="23" height="28" rx="1.500" fill="#f39b1c" />
        <rect x="4" y="4" width="16" height="22" fill="#fdf3c8" />
        <path d="M7 9h10M7 13h10M7 17h7M13 22l7-12" stroke="#b07318" strokeWidth="1.500" />
      </svg>
    ),
  },
  {
    w: 48,
    open: true,
    active: true,
    icon: (
      <svg width="24" height="30" viewBox="0 0 24 30">
        <rect x="0" y="0" width="24" height="30" rx="2" fill="#b5bcc2" />
        <rect x="2" y="3" width="20" height="24" fill="#1f68c0" />
        <Glyph x="12" y="19" textAnchor="middle" fontSize="10" fontWeight="700" fill="#cfe2f6" textLength="18" lengthAdjust="spacingAndGlyphs">CAD</Glyph>
      </svg>
    ),
  },
];

export default function App() {
  return (
    <Page>
      <Global />
      <TitleBar>
        <svg width="16" height="16" viewBox="0 0 16 16">
          <rect width="16" height="16" fill="#2a5a9c" />
          <rect x="1" y="1" width="14" height="14" fill="#3f75b8" />
          <text x="8" y="12" textAnchor="middle" fontFamily="Noto Sans CJK SC, sans-serif" fontSize="10" fontWeight="700" fill="#e8f0fa">闭</text>
        </svg>
        <TitleText>CAD快速看图 - C:\Users\Administrator.PC-20141127NRHM\Desktop\孝感吉宏厂房结构.dwg</TitleText>
        <WindowButtons>
          <WindowButton>
            <svg width="11" height="11" viewBox="0 0 11 11"><path d="M0 5.500h11" stroke="#111" /></svg>
          </WindowButton>
          <WindowButton>
            <svg width="11" height="11" viewBox="0 0 11 11" fill="none" stroke="#111"><path d="M.5 2.500h8v8h-8zM2.500 2.500v-2h8v8h-2" /></svg>
          </WindowButton>
          <WindowButton>
            <svg width="11" height="11" viewBox="0 0 11 11" fill="none" stroke="#111"><path d="M.5.500l10 10M10.500.500l-10 10" /></svg>
          </WindowButton>
        </WindowButtons>
      </TitleBar>

      <LevelBadge>70</LevelBadge>

      <ImeLogo>
        <svg width="30" height="28" viewBox="0 0 30 28">
          <path d="M2 6L23 0q3-1 4 2l2 18q0 3-3 4L9 27q-3 1-4-2L0 9q-.5-2 2-3z" fill="#f2541b" />
          <Glyph x="15" y="23" textAnchor="middle" fontSize="27" fontWeight="700" fill="#fff" textLength="22" lengthAdjust="spacingAndGlyphs">S</Glyph>
        </svg>
      </ImeLogo>
      <ImeBar>
        <ImeSlot>中</ImeSlot>
        <ImeSlot>
          <svg width="14" height="12" viewBox="0 0 14 12"><circle cx="3" cy="3" r="1.800" fill="none" stroke="#3f86c9" /><path d="M11 5q1.500 2-1.500 5" stroke="#1976c8" strokeWidth="2" fill="none" /></svg>
        </ImeSlot>
        <ImeSlot>
          <svg width="17" height="17" viewBox="0 0 17 17" fill="none" stroke="#1976c8" strokeWidth="1.500"><circle cx="8.500" cy="8.500" r="7.500" /><path d="M4.500 10q4 4 8 0M6 5v2M11 5v2" /></svg>
        </ImeSlot>
        <ImeSlot>
          <svg width="14" height="18" viewBox="0 0 14 18" fill="none"><rect x="4" y="0" width="6" height="11" rx="3" fill="#1976c8" /><path d="M1.500 8q0 5 5.500 5t5.500-5M7 13v4M3 17h8" stroke="#1976c8" strokeWidth="1.500" /></svg>
        </ImeSlot>
        <ImeSlot>
          <svg width="17" height="12" viewBox="0 0 17 12"><rect width="17" height="12" rx="1.500" fill="#1976c8" /><path d="M2 3h13M2 6h13" stroke="#fff" strokeDasharray="1.500 1" /><path d="M4 9.500h9" stroke="#fff" strokeWidth="1.300" /></svg>
        </ImeSlot>
        <ImeSlot>
          <svg width="17" height="17" viewBox="0 0 17 17" fill="#b9c6d3"><circle cx="6" cy="4" r="3.500" /><path d="M0 14q0-6 6-6 3 0 4 2v4z" /><rect x="7.500" y="9.500" width="9" height="6" fill="#fff" stroke="#b9c6d3" /></svg>
        </ImeSlot>
        <ImeSlot>
          <svg width="15" height="15" viewBox="0 0 15 15" fill="#1976c8"><path d="M4.500 0L0 3l1.500 4 2-1v9h8V6l2 1L15 3l-4.500-3q-3 3-6 0z" /></svg>
        </ImeSlot>
        <ImeSlot>
          <svg width="15" height="15" viewBox="0 0 15 15" fill="none"><path d="M2 13.500l6.500-7" stroke="#1976c8" strokeWidth="3.500" /><path d="M8 7a4 4 0 0 1 5-6l-2.500 2.500 1.500 1.500L14.500 3a4 4 0 0 1-6 5" fill="#1976c8" /></svg>
        </ImeSlot>
      </ImeBar>

      <Toolbar>
        <ToolGroup tools={GROUP_A} />
        <ToolSep $ml={3} $mr={2} />
        <ToolGroup tools={GROUP_B} />
        <ToolSep $ml={4} $mr={1} />
        <ToolGroup tools={GROUP_C} />
        <ToolSep $ml={3} $mr={2} />
        <ToolGroup tools={GROUP_D} />
      </Toolbar>

      <DocTabs>
        <DocTab>
          孝感吉宏厂房结构
          <DocClose>
            <svg width="9" height="9" viewBox="0 0 9 9" fill="none" stroke="#6a6a6a" strokeWidth="1.200"><path d="M.5.500l8 8M8.500.500l-8 8" /></svg>
          </DocClose>
        </DocTab>
      </DocTabs>

      <Canvas>
        <Drawing />
      </Canvas>

      <SheetBar>
        <SheetTab $w={66} $on>
          <TabShape w={66} on />
          <span>模型</span>
        </SheetTab>
        <SheetTab $w={64}>
          <TabShape w={64} />
          <span>布局1</span>
        </SheetTab>
        <SheetTab $w={65}>
          <TabShape w={65} />
          <span>布局2</span>
        </SheetTab>
      </SheetBar>

      <StatusBar>
        <Coords>x = 5799839 y = 379407</Coords>
        <ScaleNote>模型中的标注比例:1</ScaleNote>
      </StatusBar>

      <Taskbar>
        <StartButton>
          <svg width="16" height="16" viewBox="0 0 16 16" fill="#fff"><path d="M0 2.300l6.500-.9v6.200H0zM7.300 1.300L16 0v7.600H7.300zM0 8.400h6.500v6.200L0 13.700zM7.300 8.400H16V16l-8.700-1.300z" /></svg>
        </StartButton>
        <SearchBox>
          <svg width="22" height="22" viewBox="0 0 22 22" fill="none"><circle cx="11" cy="11" r="8.500" stroke="#eee" strokeWidth="2.600" /></svg>
          <SearchText>在这里输入你要搜索的内容</SearchText>
          <svg width="14" height="20" viewBox="0 0 14 20" fill="none" stroke="#9a9a9a" strokeWidth="1.200"><rect x="4" y="1" width="6" height="11" rx="3" /><path d="M1 9q0 6 6 6t6-6M7 15v4M4 19h6" /></svg>
        </SearchBox>
        <TaskSlot $w={48}>
          <svg width="21" height="13" viewBox="0 0 21 13" fill="none" stroke="#fff"><rect x="4.500" y=".5" width="12" height="12" /><path d="M2.500 2H.5v9h2M18.500 2h2v9h-2" /></svg>
        </TaskSlot>
        {TASK_ICONS.map((t, i) => (
          <TaskSlot key={i} $w={t.w} $open={t.open} $active={t.active}>
            {t.icon}
          </TaskSlot>
        ))}
        <Tray>
          <TrayText $w={24}>链接</TrayText>
          <TrayIcon $w={32}>
            <svg width="13" height="8" viewBox="0 0 13 8" fill="none" stroke="#e8e8e8" strokeWidth="1.200"><path d="M1 7l5.500-6L12 7" /></svg>
          </TrayIcon>
          <TrayIcon $w={16}>
            <svg width="17" height="12" viewBox="0 0 17 12" fill="none" stroke="#eee"><rect x="4.500" y="2.500" width="11" height="8" /><rect x="6" y="4" width="8" height="5" fill="#eee" stroke="none" /><path d="M0 4h4M2 1v6" /></svg>
          </TrayIcon>
          <TrayIcon $w={30}>
            <svg width="14" height="14" viewBox="0 0 14 14" fill="none" stroke="#bbb"><path d="M1 13q0-10 11-11M3.500 13q0-7 8.500-8M6 13q0-4 5-5" /><circle cx="10" cy="12" r="1.500" fill="#fff" stroke="none" /></svg>
          </TrayIcon>
          <TrayIcon $w={18}>
            <svg width="16" height="14" viewBox="0 0 16 14" fill="none" stroke="#ddd"><path d="M1 5h3l4-3.500v11L4 9H1zM10.500 4.500q1.500 2.500 0 5M13 2.500q2.500 4.500 0 9" /></svg>
          </TrayIcon>
          <TrayIcon $w={38}>
            <svg width="22" height="13" viewBox="0 0 22 13" fill="none" stroke="#eee"><rect x=".5" y=".5" width="21" height="12" /><path d="M3 4h16M3 6.500h16" strokeDasharray="1 1" /><path d="M6 9.500h10" /></svg>
          </TrayIcon>
          <TrayText $w={18}>中</TrayText>
        </Tray>
        <TaskSlot $w={40}>
          <svg width="16" height="18" viewBox="0 0 16 18"><path d="M1 3l11-3q2 0 2.500 2L16 14q0 2-2 2.500L4 18q-2 0-2.500-2L0 5q0-1.500 1-2z" fill="#ee4f14" /><Glyph x="8" y="14" textAnchor="middle" fontSize="14" fontWeight="700" fill="#fff">S</Glyph></svg>
        </TaskSlot>
        <Clock>
          <div>13:54</div>
          <div>2018/5/14</div>
        </Clock>
        <Notify>
          <svg width="16" height="16" viewBox="0 0 16 16" fill="none" stroke="#fff"><path d="M.5 1.500h15v11h-5L8 15l-2.500-2.500h-5z" /></svg>
        </Notify>
      </Taskbar>
    </Page>
  );
}
